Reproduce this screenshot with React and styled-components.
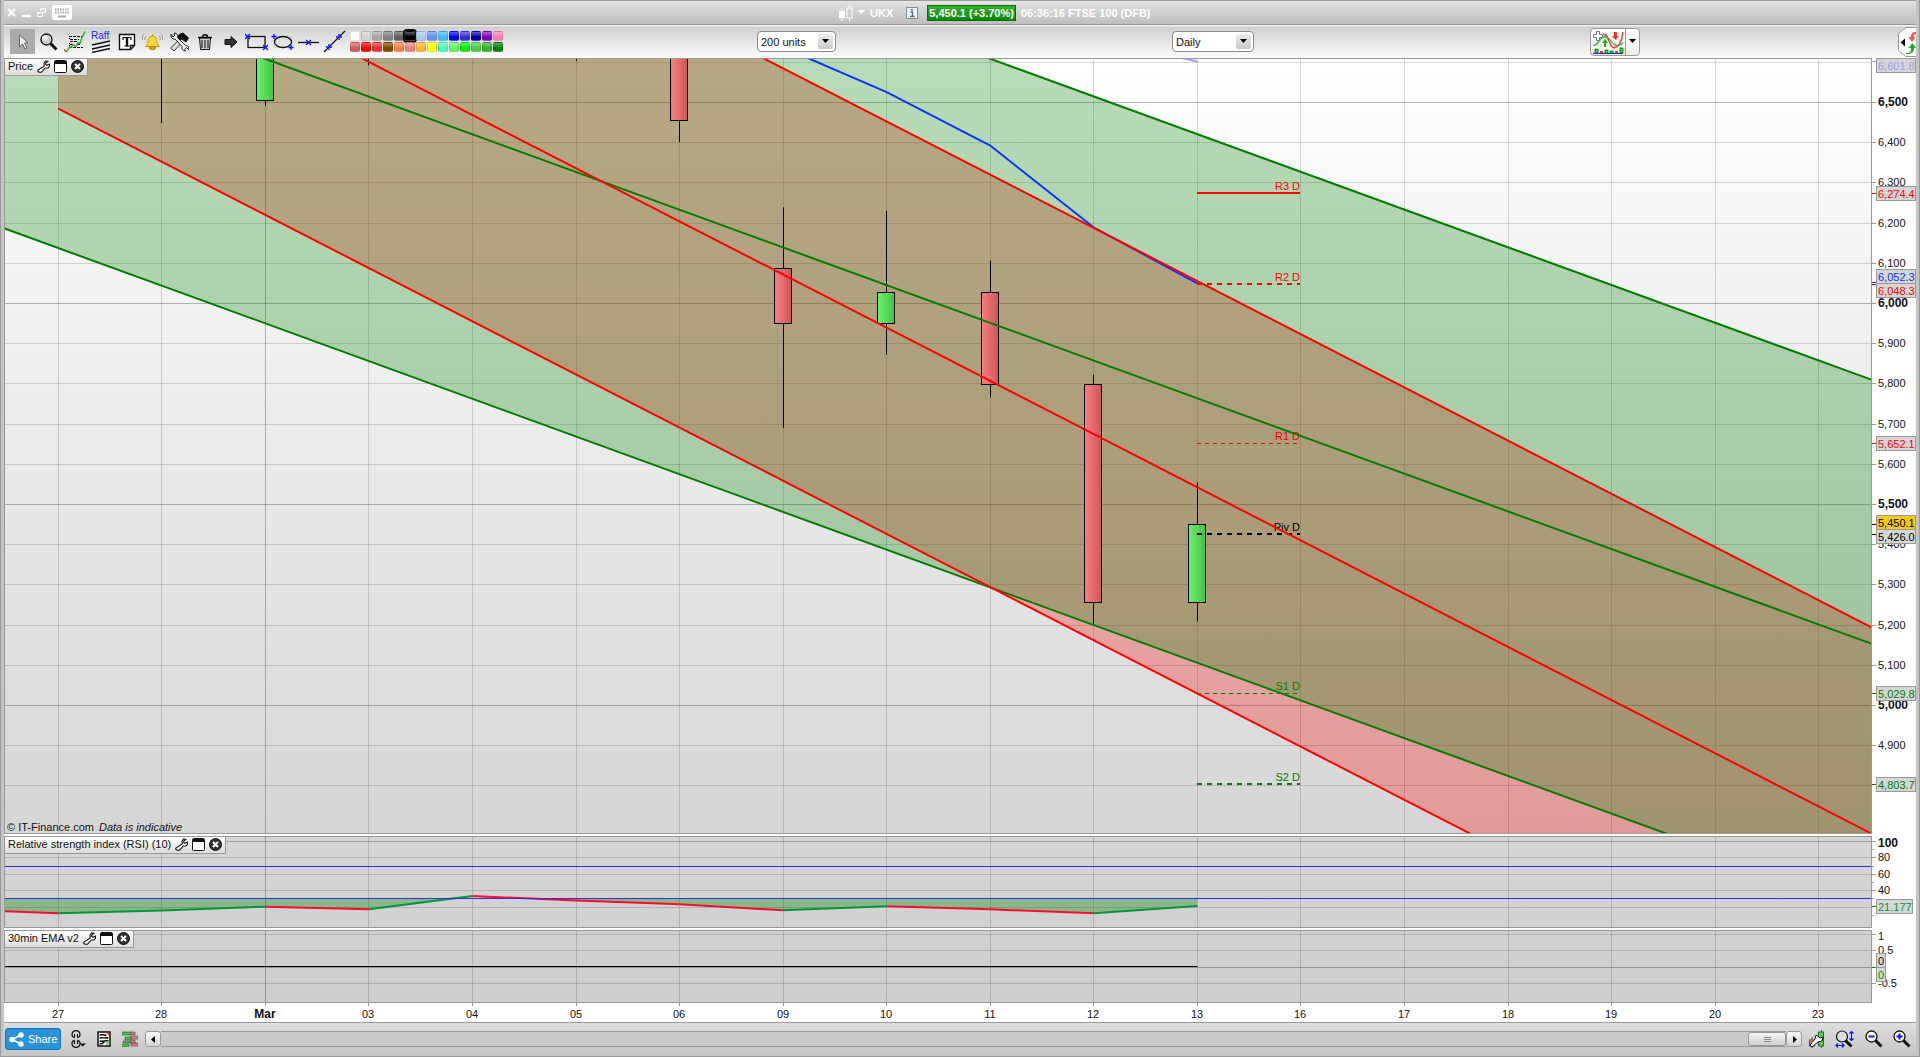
import React, { useId, useLayoutEffect, useRef, useState } from "react";
import styled, { createGlobalStyle } from "styled-components";

const GlobalStyle = createGlobalStyle`
  * {
    box-sizing: border-box;
  }
  body {
    margin: 0;
    font: 11px/14px "Liberation Sans", Arial, sans-serif;
    color: #111;
  }
  button, select, input {
    font: inherit;
    color: inherit;
    margin: 0;
  }
  svg {
    display: block;
  }
`;

const Window = styled.div`
  display: flex;
  flex-direction: column;
  min-height: 100vh;
  padding: 0 3px 1px 3px;
  background: #c4c4c4;
  border: 1px solid #999;
  border-top: 0;
`;

const TitleBar = styled.header`
  display: grid;
  grid-template-columns: 835fr 1077fr;
  align-items: center;
  height: 25px;
  border-top: 1px solid #999;
  border-bottom: 1px solid #999;
  background: linear-gradient(#e8e8e8, #dedede 10%, #bebebe);
  color: #fff;
  font-weight: bold;
`;

const WindowButtons = styled.div`
  display: flex;
  align-items: center;
  gap: 6px;
  padding-left: 3px;
`;

const PlainButton = styled.button`
  display: flex;
  align-items: center;
  justify-content: center;
  padding: 0;
  border: 0;
  background: none;
`;

const Instrument = styled.div`
  display: flex;
  align-items: center;
  gap: 5px;
  white-space: nowrap;
`;

const Symbol = styled.span`
  margin-right: 8px;
`;

const Quote = styled.span`
  margin-left: 4px;
  padding: 0 1px;
  border: 1px solid #067006;
  background: linear-gradient(#2fae2f, #0d860d);
`;

const Toolbar = styled.div`
  display: grid;
  grid-template-columns: 753fr 415fr 418fr 326fr;
  align-items: center;
  height: 33px;
  background: linear-gradient(#fff, #d0d0d0 6%, #e4e4e4 50%, #fdfdfd);
`;

const Tools = styled.div`
  display: flex;
  align-items: center;
  gap: 1px;
  padding-left: 6px;
`;

const ToolButton = styled(PlainButton)`
  width: 25px;
  height: 25px;
  background: ${(p) => (p.$active ? "#ababab" : "none")};
`;

const Palette = styled.div`
  display: grid;
  grid-template-columns: repeat(14, 10px);
  gap: 1px;
  margin-left: 2px;
`;

const Swatch = styled.button`
  height: 10px;
  padding: 0;
  border: 1px solid rgba(0, 0, 0, 0.12);
  border-radius: 2px;
  background: linear-gradient(rgba(255, 255, 255, 0.35), rgba(255, 255, 255, 0.1) 45%, transparent 50%)
    ${(p) => p.$color};
  outline: ${(p) => (p.$active ? "2px solid #111" : "none")};
`;

const SelectBox = styled.label`
  position: relative;
  display: block;
  width: ${(p) => p.$width};
`;

const Select = styled.select`
  appearance: none;
  width: 100%;
  height: 21px;
  padding: 0 20px 0 3px;
  border: 1px solid #8c8c8c;
  border-radius: 4px;
  background: #fff;
`;

const SelectArrow = styled.span`
  position: absolute;
  top: 3px;
  right: 3px;
  display: flex;
  align-items: center;
  justify-content: center;
  width: 15px;
  height: 15px;
  border-radius: 2px;
  background: linear-gradient(#eee, #c8c8c8);
  pointer-events: none;
`;

const ToolbarEnd = styled.div`
  display: flex;
  align-items: center;
  justify-content: space-between;
`;

const SplitButton = styled.div`
  display: flex;
  height: 28px;
  border: 1px solid #999;
  border-radius: 4px;
  background: linear-gradient(#fff, #eee);
`;

const SplitPart = styled(PlainButton)`
  width: ${(p) => p.$width};
  & + & {
    border-left: 1px solid #999;
  }
`;

const Workspace = styled.main`
  flex: 1;
  display: flex;
  flex-direction: column;
  gap: 2px;
  background: #fff;
`;

const Panel = styled.section`
  position: relative;
  flex: ${(p) => (p.$height ? `0 0 ${p.$height}` : "1 0 300px")};
  min-width: 0;
  & > svg {
    position: absolute;
    inset: 0;
    overflow: visible;
  }
`;

const PanelTitle = styled.div`
  position: absolute;
  top: 1px;
  left: 1px;
  display: flex;
  align-items: center;
  gap: 4px;
  height: 17px;
  padding: 0 3px 2px;
  border-right: 1px solid #999;
  border-bottom: 1px solid #999;
  background: linear-gradient(#fff, #dcdcdc);
`;

const DateAxis = styled.div`
  height: 20px;
  margin-top: -2px;
  border-bottom: 1px solid #999;
`;

const BottomBar = styled.footer`
  display: flex;
  align-items: center;
  height: 32px;
  padding: 0 5px 0 1px;
  background: linear-gradient(#dedede, #c6c6c6);
`;

const ShareButton = styled.button`
  display: flex;
  align-items: center;
  gap: 4px;
  height: 22px;
  padding: 0 3px;
  border: 1px solid #1674b4;
  border-radius: 3px;
  background: #2a92d8;
  color: #fff;
`;

const BottomIcons = styled.div`
  display: flex;
  align-items: center;
  gap: ${(p) => p.$gap};
  padding: ${(p) => p.$padding};
`;

const ScrollButton = styled(PlainButton)`
  width: 16px;
  height: 16px;
  border: 1px solid #999;
  border-radius: 3px;
  background: linear-gradient(#fafafa, #d4d4d4);
`;

const ScrollRange = styled.input`
  appearance: none;
  flex: 1;
  min-width: 0;
  height: 16px;
  border: 1px solid #999;
  border-left: 0;
  border-right: 0;
  background: #cbcbcb;
  &::-webkit-slider-thumb {
    appearance: none;
    width: 38px;
    height: 14px;
    border: 1px solid #999;
    border-radius: 3px;
    background:
      repeating-linear-gradient(#888 0 1px, transparent 1px 2px) center / 7px 5px no-repeat,
      linear-gradient(#f4f4f4, #d0d0d0);
  }
`;

/* ---------- icons ---------- */

const Icon = ({ w = 20, h = 20, children }) => (
  <svg width={w} height={h} viewBox={`0 0 ${w} ${h}`} fill="none" stroke="#111" aria-hidden="true">
    {children}
  </svg>
);

const CloseIcon = () => (
  <Icon w={9} h={9}>
    <path d="M1 1l7 7M8 1l-7 7" stroke="#fff" strokeWidth="2" />
  </Icon>
);

const MinimizeIcon = () => (
  <Icon w={9} h={9}>
    <path d="M0 8h9" stroke="#fff" strokeWidth="2" />
  </Icon>
);

const RestoreIcon = () => (
  <Icon w={9} h={9}>
    <path d="M3.5 3V.5h5v4H6M3 1h6M.5 4.5h5v4h-5zM0 5h6" stroke="#fff" />
  </Icon>
);

const KeyboardIcon = () => (
  <Icon w={20} h={15}>
    <rect width="20" height="15" rx="2" fill="#fff" stroke="none" />
    <path d="M3 4.5h14M3 7.5h14" stroke="#aaa" strokeWidth="2" strokeDasharray="1.5 1" />
    <path d="M6 11.5h8" stroke="#aaa" strokeWidth="2" />
  </Icon>
);

const CandlesIcon = () => (
  <Icon w={14} h={16}>
    <path d="M3 3v13M10.5 0v3M10.5 13v3" stroke="#fff" />
    <rect x="0" y="6" width="6" height="7" fill="#fff" stroke="none" />
    <rect x="8" y="3" width="5" height="10" stroke="#fff" />
  </Icon>
);

const InfoIcon = () => (
  <Icon w={12} h={12}>
    <rect x=".5" y=".5" width="11" height="11" fill="#eef3f7" stroke="#7d8f9c" />
    <path d="M5 2.8h2" stroke="#5a6b78" strokeWidth="1.6" />
    <path d="M4.500 5h2v4.500M4 9.500h4.500" stroke="#5a6b78" strokeWidth="1.300" />
  </Icon>
);

const Triangle = ({ color = "#000", dir = "down" }) => {
  const shapes = {
    down: "M0 1h7L3.500 5z",
    left: "M5 0v7L1 3.500z",
    right: "M2 0v7l4-3.500z",
  };
  return (
    <Icon w={7} h={7}>
      <path d={shapes[dir]} fill={color} stroke="none" />
    </Icon>
  );
};

const PointerIcon = () => (
  <Icon>
    <path d="M6.500 3v12l3-3 2.500 5 2-1-2.500-5H15z" fill="#eee" stroke="#666" />
  </Icon>
);

const MagnifierIcon = ({ mark }) => (
  <Icon w={18} h={18}>
    <path d="M10.500 10.500l6 6" strokeWidth="3" />
    <circle cx="6.500" cy="6.500" r="5.500" fill={mark ? "#fff" : "#ccc"} strokeWidth="1.300" />
    {!mark && <ellipse cx="5" cy="5" rx="3" ry="2.500" fill="#f4f4f4" stroke="none" />}
    {mark && <path d={mark === "plus" ? "M3.500 6.500h6M6.500 3.500v6" : "M3.500 6.500h6"} stroke="#11f" strokeWidth="2" />}
  </Icon>
);

const IndicatorIcon = () => (
  <Icon w={22} h={22}>
    <path d="M5 5.500h13M6 8.500h9M6 10.500h8M6 13.500h4M13 13.500h4M5 16.500h14" strokeDasharray="3 1" />
    <path d="M5.500 5v4M5.500 12v4" strokeDasharray="1 1" />
    <path d="M0 18.500l2.500 2.500M10 14l2 1.500" stroke="#e33" strokeWidth="1.500" />
    <path d="M2.500 21l3-5h2l2-3M12 15.500l2-4 2 1 2-6 3-6" stroke="#2b2" strokeWidth="1.500" />
  </Icon>
);

const RaffText = styled.text`
  font: 10px "Liberation Sans", Arial, sans-serif;
  fill: #1030e8;
  stroke: none;
`;

const RaffIcon = () => (
  <Icon w={22} h={22}>
    <RaffText x="1" y="8">Raff</RaffText>
    <path d="M2 14l18-4M2 18l18-4M2 21.500l18-4" strokeWidth="1.300" />
  </Icon>
);

const TextIcon = () => (
  <Icon w={18} h={18}>
    <path d="M1.500 1.500h15v11l-4 4h-11zM16.500 12.500h-4v4" fill="#fff" strokeWidth="1.400" />
    <path d="M4.500 4.500h9M5 4v3M13 4v3M6.500 13h5" strokeWidth="1.200" />
    <path d="M9 4.500v9" strokeWidth="2.400" />
  </Icon>
);

const BellIcon = () => (
  <Icon w={21} h={18}>
    <path d="M10.500 1v2M3.500 13.500c2.500-2 2.500-4 3-7 .5-2.500 2-3.500 4-3.500s3.500 1 4 3.500c.5 3 .5 5 3 7z" fill="#fbd83c" stroke="#c8930a" />
    <ellipse cx="10.500" cy="15" rx="3" ry="1.500" fill="#e8a800" stroke="#a87800" />
    <path d="M4 3c-1.500 1-1.500 3-1 4M2 1C.5 3 0 5 .5 7M17 3c1.500 1 1.500 3 1 4M19 1c1.500 2 2 4 1.500 6" stroke="#999" />
  </Icon>
);

const ToolsIcon = () => (
  <Icon>
    <path d="M10 8l3 2.500-8 8.500-3.500-3z" fill="#ddd" strokeWidth=".8" />
    <path d="M10 2.500l4-1.500 5.500 5-2.500 4-4-3-2 1-2-2z" fill="#111" />
    <path d="M2 2l2 3 2-2-1-2c3 0 4 2 3.500 4.500l8 8c2.500 0 4 1.500 3 4l-2-2-2 2 1 1.500c-3 0-4-2-3.500-4.500l-7-7.500C3 7.500 1.500 5 2 2z" fill="#eee" strokeWidth=".9" />
  </Icon>
);

const TrashIcon = () => (
  <Icon w={16} h={18}>
    <path d="M2.500 5l1 11.500h9l1-11.500z" fill="#ccc" />
    <path d="M1 4.500h14M5.500 4c0-3 5-3 5 0" strokeWidth="1.500" />
    <path d="M5 7v8M8 7v8M11 7v8" />
  </Icon>
);

const ArrowIcon = () => (
  <Icon w={16} h={14}>
    <path d="M2 4.500h6V1.500l6 5.500-6 5.500V9.500H2z" fill="#333" stroke="#111" />
  </Icon>
);

const RectIcon = () => (
  <Icon w={23} h={18}>
    <rect x="3" y="3.500" width="17" height="11" strokeWidth="1.300" />
    <path d="M0 1l5 5M5 1L0 6M18 12l5 5M23 12l-5 5" stroke="#11f" strokeWidth="1.300" />
  </Icon>
);

const EllipseIcon = () => (
  <Icon w={23} h={18}>
    <rect x="3.500" y="3.500" width="17" height="11" stroke="#bbb" strokeDasharray="1 1" />
    <ellipse cx="12" cy="9" rx="8.500" ry="5.500" strokeWidth="1.300" />
    <path d="M3 1v5M.5 3.500h5M20 12v5M17.500 14.500h5" stroke="#11f" strokeWidth="1.300" />
  </Icon>
);

const HLineIcon = () => (
  <Icon w={23} h={18}>
    <path d="M1 9.500h21" strokeWidth="1.300" />
    <path d="M9 7l5 5M14 7l-5 5" stroke="#11f" strokeWidth="1.300" />
  </Icon>
);

const TrendIcon = () => (
  <Icon w={23} h={23}>
    <path d="M1 22L22 1" strokeWidth="1.300" />
    <path d="M6 14v6M3 17h6M16 4v6M13 7h6" stroke="#11f" strokeWidth="1.300" />
  </Icon>
);

const AddIndicatorIcon = () => (
  <Icon w={32} h={24}>
    <path d="M11 4c6 0 6 14 11 14 4 0 7-4 9-14v8c-3 4-6 5-9 4-4-2-6-8-11-8-3 2-5 5-9 7z" fill="#cfe6cf" stroke="none" />
    <path d="M11 4c6-1 6 14 11 14 5-1 8-8 9-16" stroke="#e44" strokeWidth="1.500" />
    <path d="M1 15.500c6 0 6-8 12-9 6 1 7 9 12 9 3 0 5-1 6-3" stroke="#3a3" strokeWidth="1.200" />
    <path d="M4.500 1.500h3v3h3v3h-3v3h-3v-3h-3v-3h3z" fill="#fff" stroke="#777" />
    <path d="M12 17v-4h-2l3-4 3 4h-2v4z" fill="#1b1" stroke="none" />
    <path d="M22 2h3v4h2l-3.500 4L20 6h2z" fill="#e33" stroke="none" />
    <path d="M3 19h3v4H3zM13 20h3v3h-3zM18 21h3v2h-3zM28 18h3v5h-3z" fill="#1d1" stroke="#171" strokeWidth=".8" />
    <path d="M8 21h3v2H8zM23 21h3v2h-3z" fill="#e33" stroke="none" />
    <path d="M1 23.500h30" stroke="#22c" />
  </Icon>
);

const SideTabIcon = () => (
  <Icon w={18} h={30}>
    <path d="M18 .5H8l-6 4.500q-1.500 1-1.500 3v14q0 2 1.500 3l6 4.500h10" fill="#fff" stroke="#999" />
    <path d="M7 11.500v8L2.500 15.500z" fill="#000" stroke="none" />
    <path d="M18 5c-4 0-5 2-5 5h-3l4 5 3.500-5h-2c0-2 .5-3 2.500-3z" fill="#e55" stroke="none" />
    <path d="M8 26c5 0 5-2 5-5h-2.500l4-5 3.500 5h-2c0 4-2 6-8 6z" fill="#2a2" stroke="none" />
  </Icon>
);

const WrenchIcon = () => (
  <Icon w={13} h={13}>
    <path d="M8.500.8L7 3.300 7.300 6 1.200 9.800q-1.200 1.700 1 2.400h2.300L8.300 8H11l1.600-2V4L10 5.300 8.700 4.500 8.800 3l2-1.500z" fill="#fff" strokeWidth="1.100" />
  </Icon>
);

const MaximizeIcon = () => (
  <Icon w={13} h={13}>
    <rect x=".5" y=".5" width="12" height="12" rx="1" fill="#fff" />
    <path d="M1 2.500h11" strokeWidth="3" />
  </Icon>
);

const CloseRoundIcon = () => (
  <Icon w={13} h={13}>
    <circle cx="6.500" cy="6.500" r="6" fill="#333" />
    <path d="M4 4l5 5M9 4L4 9" stroke="#fff" strokeWidth="2" />
  </Icon>
);

const ShareIcon = () => (
  <Icon w={15} h={15}>
    <path d="M12 3L3 7.500 12 12" stroke="#fff" strokeWidth="1.500" />
    <g fill="#fff" stroke="none">
      <circle cx="12" cy="3" r="2.700" />
      <circle cx="3" cy="7.500" r="2.700" />
      <circle cx="12" cy="12" r="2.700" />
    </g>
  </Icon>
);

const LinkIcon = () => (
  <Icon w={15} h={18}>
    <path d="M3.500 7.500C-.5 7 .5.700 5 .7s5.500 6.300 1.500 6.800M3.500 10.500C-.5 11 .5 17.300 5 17.300s5.500-6.300 1.500-6.800" strokeWidth="1.300" />
    <path d="M3.500 4v3.500M6.500 4v3.500M3.500 10.500V14M6.500 10.500V14" strokeWidth="1.100" />
    <path d="M8.500 13.500H15l-3.200 3z" fill="#000" stroke="none" />
  </Icon>
);

const ReportIcon = () => (
  <Icon w={14} h={16}>
    <rect x="1" y="1" width="12" height="14" fill="#fff" strokeWidth="1.500" />
    <path d="M2.500 4c3 0 4-1 7 .500M2.500 7c3-1 5 1 9-.500M2.500 10c4 1 5-1 9 0M2.500 13c3 0 4-1 5-2" strokeWidth="1.400" />
    <path d="M9 2h3v3z" fill="#e55" stroke="none" />
    <path d="M10 14v-3M12 14v-4" stroke="#2a2" />
  </Icon>
);

const DepthIcon = () => (
  <Icon w={16} h={16}>
    <path d="M0 1h9v3H0zM3 6h6v3H3zM1 10h8v2H1zM0 13h7v3H0z" fill="#3c3" stroke="#555" strokeWidth=".7" />
    <path d="M9 1h4v3H9zM9 5h7v3H9zM9 9h4v3H9zM9 12h7v3H9z" fill="#e77" stroke="#555" strokeWidth=".7" />
  </Icon>
);

const ChartSettingsIcon = () => (
  <Icon w={16} h={18}>
    <path d="M3 7v11M12.500 0v18" stroke="#555" />
    <rect x=".5" y="10" width="5" height="6" fill="#e88" stroke="#644" />
    <rect x="9.500" y="2" width="5" height="14" fill="#4d4" stroke="#363" />
    <path d="M7 5l-1 4-5 6 2 2 6-5 4-1 1-4-3 1-1-1z" fill="#fff" />
  </Icon>
);

const ZoomFitIcon = () => (
  <Icon w={20} h={18}>
    <path d="M10.500 10.500l6 6" strokeWidth="3" />
    <circle cx="7" cy="6.500" r="5.500" fill="#ddd" strokeWidth="1.200" />
    <path d="M16.500 2v8M14.500 3.500l2-2 2 2M14.500 8.500l2 2 2-2M1 15.500h8M3 13.500l-2 2 2 2M7 13.500l2 2-2 2" stroke="#11f" strokeWidth="1.200" />
  </Icon>
);

/* ---------- chart ---------- */

const AXIS_WIDTH = 44;

const dates = ["27", "28", "Mar", "03", "04", "05", "06", "09", "10", "11", "12", "13", "16", "17", "18", "19", "20", "23"];

const candles = [
  { bar: 1, high: 6700, low: 6449 },
  { bar: 2, high: 6700, low: 6492, open: 6504, close: 6700 },
  { bar: 3, high: 6700, low: 6592 },
  { bar: 5, high: 6700, low: 6604 },
  { bar: 6, high: 6700, low: 6402, open: 6700, close: 6454 },
  { bar: 7, high: 6239, low: 5691, open: 6087, close: 5949 },
  { bar: 8, high: 6231, low: 5873, open: 5949, close: 6027 },
  { bar: 9, high: 6107, low: 5766, open: 6027, close: 5798 },
  { bar: 10, high: 5823, low: 5199, open: 5798, close: 5255 },
  { bar: 11, high: 5555, low: 5209, open: 5255, close: 5450 },
];

const channels = [
  { color: "#f00", fill: "rgba(255, 0, 0, 0.28)", from: 0, slope: -132.3, upper: 7511, middle: 6998, lower: 6485 },
  { color: "#007d00", fill: "rgba(0, 128, 0, 0.28)", from: -1, slope: -93.8, upper: 7453, middle: 6796, lower: 6138 },
];

const average = [[7, 6637], [8, 6526], [9, 6393], [10, 6189], [11, 6050]];

const pivots = [
  { name: "R3 D", value: 6274.4, color: "#f00", width: 2 },
  { name: "R2 D", value: 6048.3, color: "#f00", width: 2, dash: "5 5" },
  { name: "R1 D", value: 5652.1, color: "#f00", width: 1, dash: "4 4" },
  { name: "Piv D", value: 5426.0, color: "#000", width: 2, dash: "5 5" },
  { name: "S1 D", value: 5029.8, color: "#007d00", width: 1, dash: "4 4" },
  { name: "S2 D", value: 4803.7, color: "#007d00", width: 2, dash: "5 5" },
];

// shift keeps neighbouring tags from overlapping
const priceTags = [
  { value: 6601.8, text: "6,601.8", color: "#9c9cf0", shift: 4 },
  { value: 6274.4, text: "6,274.4", color: "#f00" },
  { value: 6052.3, text: "6,052.3", color: "#0b35ff", shift: -6 },
  { value: 6048.3, text: "6,048.3", color: "#f00", shift: 6 },
  { value: 5652.1, text: "5,652.1", color: "#f00" },
  { value: 5450.1, text: "5,450.1", color: "#000", fill: "#f6c915", shift: -2 },
  { value: 5426.0, text: "5,426.0", color: "#000", shift: 2 },
  { value: 5029.8, text: "5,029.8", color: "#007d00" },
  { value: 4803.7, text: "4,803.7", color: "#007d00" },
];

const rsi = [[-0.52, 14.8], [0, 12.3], [1, 15.8], [2, 20.4], [3, 17.2], [4, 33.4], [5, 28], [6, 23.5], [7, 16], [8, 20.8], [9, 17.2], [10, 12.3], [11, 21.177]];

const Label = styled.text`
  font-size: ${(p) => (p.$major ? "12px" : "11px")};
  font-weight: ${(p) => (p.$major ? "bold" : "normal")};
  fill: ${(p) => p.$color || "#111"};
`;

const GridLine = styled.line`
  stroke: ${(p) => (p.$major ? "rgba(0, 0, 0, 0.27)" : "rgba(0, 0, 0, 0.15)")};
  shape-rendering: crispEdges;
`;

function useSize() {
  const ref = useRef(null);
  const [size, setSize] = useState({ width: 0, height: 0 });
  useLayoutEffect(() => {
    const measure = () => {
      const box = ref.current.getBoundingClientRect();
      setSize({ width: Math.round(box.width), height: Math.round(box.height) });
    };
    measure();
    const observer = new ResizeObserver(measure);
    observer.observe(ref.current);
    return () => observer.disconnect();
  }, []);
  return [ref, size];
}

const crisp = (n) => Math.floor(n) + 0.5;
const barX = (width) => (bar) => (width * (bar + 0.5137)) / 18.0185;

function AxisTag({ y, text, color, fill }) {
  return (
    <g>
      <rect x="4.500" y={y - 7} width={text.length > 1 ? (text.length > 6 ? 39 : 36) : 9} height="14" fill={fill || "#d6d6d6"} stroke="#999" />
      <Label x="6" y={y + 4} $color={color}>{text}</Label>
    </g>
  );
}

function ChartPanel({ title, height, top, bottom, ticks, minorTicks = [], tags, shade, note, children }) {
  const [ref, size] = useSize();
  const id = useId();
  const w = Math.max(size.width - AXIS_WIDTH - 2, 0);
  const h = Math.max(size.height - 2, 0);
  const x = barX(w);
  const y = (v) => ((top - v) / (top - bottom)) * h;

  return (
    <Panel ref={ref} $height={height} aria-label={title}>
      <svg width={size.width} height={size.height}>
        <defs>
          <linearGradient id={id} x2="0" y2="1">
            <stop offset="0" stopColor={shade[0]} />
            <stop offset="1" stopColor={shade[1]} />
          </linearGradient>
        </defs>
        <rect x=".5" y=".5" width={w + 1} height={h + 1} fill={`url(#${id})`} stroke="#999" />
        <svg x="1" y="1" width={w} height={h}>
          {dates.map((d, i) => (
            <GridLine key={d} x1={crisp(x(i))} x2={crisp(x(i))} y1="0" y2={h} $major={d === "Mar"} />
          ))}
          {ticks.map((t) => (
            <GridLine key={t.value} x1="0" x2={w} y1={crisp(y(t.value))} y2={crisp(y(t.value))} $major={t.major} />
          ))}
          {children(x, y, w, h)}
        </svg>
        <g transform={`translate(${w + 2} 1)`}>
          {minorTicks.map((v) => (
            <line key={v} x1="0" x2="2" y1={crisp(y(v))} y2={crisp(y(v))} stroke="#999" />
          ))}
          {ticks.map((t) => (
            <g key={t.value}>
              {t.text && <line x1="0" x2="4" y1={crisp(y(t.value))} y2={crisp(y(t.value))} stroke="#999" />}
              <Label x="6" y={crisp(y(t.value)) + (t.drop || 3)} $major={t.bold}>{t.text}</Label>
            </g>
          ))}
          {tags.map((t) => (
            <line key={t.text + t.color} x1="0" x2="4" y1={crisp(y(t.value))} y2={crisp(y(t.value))} stroke={t.color} />
          ))}
          {tags.map((t) => (
            <AxisTag key={t.text + t.color} y={crisp(y(t.value)) + (t.shift || 0)} text={t.text} color={t.color} fill={t.fill} />
          ))}
        </g>
        {note && (
          <Label x="3" y={h - 1}>
            {note[0]}
            <tspan dx="5" fontStyle="italic">{note[1]}</tspan>
          </Label>
        )}
      </svg>
      <PanelTitle>
        {title}
        <PlainButton aria-label="Settings"><WrenchIcon /></PlainButton>
        <PlainButton aria-label="Maximize"><MaximizeIcon /></PlainButton>
        <PlainButton aria-label="Close panel"><CloseRoundIcon /></PlainButton>
      </PanelTitle>
    </Panel>
  );
}

function Candle({ x, y, candle }) {
  const cx = crisp(x(candle.bar));
  const rising = candle.close > candle.open;
  const bodyTop = crisp(y(Math.max(candle.open, candle.close)));
  const bodyBottom = crisp(y(Math.min(candle.open, candle.close)));
  return (
    <g stroke="#000">
      <line x1={cx} x2={cx} y1={y(candle.high)} y2={y(candle.low)} />
      {candle.open && (
        <rect x={cx - 9} y={bodyTop} width="17" height={bodyBottom - bodyTop} fill={`url(#${rising ? "rising" : "falling"})`} />
      )}
    </g>
  );
}

function PriceDrawing({ x, y }) {
  const end = 18;
  const points = (list) => list.map(([bar, v]) => `${x(bar)},${y(v)}`).join(" ");
  const segment = (c, base) => [[c.from, base + c.from * c.slope], [end, base + end * c.slope]];
  return (
    <>
      <defs>
        <linearGradient id="rising">
          <stop offset="0" stopColor="#6fef6f" />
          <stop offset="1" stopColor="#42c442" />
        </linearGradient>
        <linearGradient id="falling">
          <stop offset="0" stopColor="#fa8080" />
          <stop offset="1" stopColor="#cc5656" />
        </linearGradient>
      </defs>
      {channels.map((c) => (
        <polygon key={c.color} fill={c.fill} points={points([...segment(c, c.upper), ...segment(c, c.lower).reverse()])} />
      ))}
      {candles.map((c) => (
        <Candle key={c.bar} x={x} y={y} candle={c} />
      ))}
      <g fill="none" strokeWidth="2">
        <polyline points={points(average)} stroke="#0b35ff" />
        <polyline points={points([[10, 6660], [11, 6602]])} stroke="#a0a0ff" />
      </g>
      {pivots.map((p) => {
        const py = p.width === 2 ? Math.round(y(p.value)) : crisp(y(p.value));
        return (
          <g key={p.name}>
            <line x1={Math.floor(x(11))} x2={Math.floor(x(12))} y1={py} y2={py} stroke={p.color} strokeWidth={p.width} strokeDasharray={p.dash} />
            <Label x={Math.floor(x(12))} y={Math.floor(py) - 3} textAnchor="end" $color={p.color}>{p.name}</Label>
          </g>
        );
      })}
      {[...channels].reverse().map((c) =>
        [c.upper, c.middle, c.lower].map((base) => (
          <polyline key={base} points={points(segment(c, base))} stroke={c.color} strokeWidth="2" />
        ))
      )}
    </>
  );
}

function RsiDrawing({ x, y, w }) {
  const line = rsi.map(([bar, v]) => `${x(bar)},${y(v)}`).join(" ");
  const clip = useId();
  return (
    <>
      <clipPath id={clip}>
        <rect x="0" y={y(30)} width={w} height={y(0) - y(30)} />
      </clipPath>
      <polygon clipPath={`url(#${clip})`} fill="rgba(0, 128, 0, 0.34)" points={`${x(-0.52)},${y(30)} ${line} ${x(11)},${y(30)}`} />
      {rsi.slice(1).map(([bar, v], i) => (
        <line key={bar} x1={x(rsi[i][0])} y1={y(rsi[i][1])} x2={x(bar)} y2={y(v)} strokeWidth="2" stroke={v > rsi[i][1] ? "#00963c" : "#ff0a32"} />
      ))}
      {[70, 30].map((v) => (
        <line key={v} x1="0" x2={w} y1={crisp(y(v))} y2={crisp(y(v))} stroke="#3030dc" />
      ))}
    </>
  );
}

function Dates() {
  const [ref, size] = useSize();
  const x = barX(size.width - AXIS_WIDTH - 2);
  return (
    <DateAxis ref={ref}>
      <svg width={size.width} height="19">
        {dates.map((d, i) => (
          <g key={d}>
            <line x1={crisp(x(i)) + 1} x2={crisp(x(i)) + 1} y1="0" y2="3" stroke="#999" />
            <Label x={Math.floor(x(i)) + 1} y="15" textAnchor="middle" $major={d === "Mar"}>{d}</Label>
          </g>
        ))}
      </svg>
    </DateAxis>
  );
}

const priceTicks = Array.from({ length: 19 }, (_, i) => {
  const value = 6600 - i * 100;
  return {
    value,
    text: value < 6600 && value > 4800 ? value.toLocaleString("en-US") : "",
    major: value % 500 === 0,
    bold: value % 500 === 0,
  };
});

const rsiTicks = [
  { value: 100, text: "100", major: true, bold: true, drop: 5 },
  { value: 80, text: "80" },
  { value: 60, text: "60" },
  { value: 40, text: "40" },
  { value: 20, text: "" },
];

const emaTicks = [
  { value: 1, text: "1", drop: 5 },
  { value: 0.5, text: "0.5" },
  { value: 0, text: "", major: true },
  { value: -0.5, text: "-0.5" },
];

const tools = [
  ["Pointer", PointerIcon],
  ["Zoom", MagnifierIcon],
  ["Indicators", IndicatorIcon],
  ["Raff channel", RaffIcon],
  ["Text", TextIcon],
  ["Alert", BellIcon],
  ["Settings", ToolsIcon],
  ["Delete", TrashIcon],
  ["Arrow", ArrowIcon],
  ["Rectangle", RectIcon],
  ["Ellipse", EllipseIcon],
  ["Horizontal line", HLineIcon],
  ["Trend line", TrendIcon],
];

const colors = [
  "#fff", "#d4d4d4", "#a8a8a8", "#808080", "#606060", "#000", "#a8c8fa", "#6490fa", "#40b8fa", "#00f", "#3232d8", "#0000a0", "#8000b8", "#fa80b8",
  "#d85c5c", "#f00", "#e83030", "#804800", "#fa8040", "#f08080", "#fab830", "#ff0", "#48fac0", "#68f068", "#00f000", "#48d048", "#30b030", "#008000",
];

function DropDown({ label, value, width }) {
  return (
    <SelectBox $width={width}>
      <Select aria-label={label} defaultValue={value}>
        <option>{value}</option>
      </Select>
      <SelectArrow><Triangle /></SelectArrow>
    </SelectBox>
  );
}

function App() {
  return (
    <Window>
      <GlobalStyle />
      <TitleBar>
        <WindowButtons>
          <PlainButton aria-label="Close"><CloseIcon /></PlainButton>
          <PlainButton aria-label="Minimize"><MinimizeIcon /></PlainButton>
          <PlainButton aria-label="Restore"><RestoreIcon /></PlainButton>
          <PlainButton aria-label="Keyboard"><KeyboardIcon /></PlainButton>
        </WindowButtons>
        <Instrument>
          <CandlesIcon />
          <Triangle color="#fff" />
          <Symbol>UKX</Symbol>
          <InfoIcon />
          <Quote>5,450.1 (+3.70%)</Quote>
          <span>06:36:16 FTSE 100 (DFB)</span>
        </Instrument>
      </TitleBar>

      <Toolbar>
        <Tools>
          {tools.map(([name, ToolIcon], i) => (
            <ToolButton key={name} aria-label={name} $active={i === 0}><ToolIcon /></ToolButton>
          ))}
          <Palette>
            {colors.map((c, i) => (
              <Swatch key={c} aria-label={c} $color={c} $active={i === 5} />
            ))}
          </Palette>
        </Tools>
        <DropDown label="Units" value="200 units" width="79px" />
        <DropDown label="Period" value="Daily" width="82px" />
        <ToolbarEnd>
          <SplitButton>
            <SplitPart $width="34px" aria-label="Add indicator"><AddIndicatorIcon /></SplitPart>
            <SplitPart $width="14px" aria-label="Indicator list"><Triangle /></SplitPart>
          </SplitButton>
          <PlainButton aria-label="Trading panel"><SideTabIcon /></PlainButton>
        </ToolbarEnd>
      </Toolbar>

      <Workspace>
        <ChartPanel
          title="Price"
          top={6608.2}
          bottom={4682.8}
          ticks={priceTicks}
          tags={priceTags}
          shade={["#ffffff", "#d6d6d6"]}
          note={["© IT-Finance.com", "Data is indicative"]}
        >
          {(x, y) => <PriceDrawing x={x} y={y} />}
        </ChartPanel>
        <ChartPanel
          title="Relative strength index (RSI) (10)"
          height="92px"
          top={105.5}
          bottom={-4.4}
          ticks={rsiTicks}
          minorTicks={[90, 70, 50, 30, 10]}
          tags={[{ value: 21.177, text: "21.177", color: "#00963c" }]}
          shade={["#d6d6d6", "#d1d1d1"]}
        >
          {(x, y, w) => <RsiDrawing x={x} y={y} w={w} />}
        </ChartPanel>
        <ChartPanel
          title="30min EMA v2"
          height="73px"
          top={1.1}
          bottom={-1.06}
          ticks={emaTicks}
          tags={[
            { value: 0, text: "0", color: "#111", shift: -7 },
            { value: 0, text: "0", color: "#0a8c0a", shift: 7 },
          ]}
          shade={["#d1d1d1", "#cdcdcd"]}
        >
          {(x, y) => <line x1="0" x2={x(11)} y1={crisp(y(0)) - 1} y2={crisp(y(0)) - 1} stroke="#000" />}
        </ChartPanel>
        <Dates />
      </Workspace>

      <BottomBar>
        <ShareButton><ShareIcon />Share</ShareButton>
        <BottomIcons $gap="11px" $padding="0 7px 0 10px">
          <PlainButton aria-label="Link windows"><LinkIcon /></PlainButton>
          <PlainButton aria-label="Report"><ReportIcon /></PlainButton>
          <PlainButton aria-label="Market depth"><DepthIcon /></PlainButton>
        </BottomIcons>
        <ScrollButton aria-label="Scroll left"><Triangle dir="left" /></ScrollButton>
        <ScrollRange type="range" aria-label="Scroll position" defaultValue="100" />
        <ScrollButton aria-label="Scroll right"><Triangle dir="right" /></ScrollButton>
        <BottomIcons $gap="10px" $padding="0 0 0 7px">
          <PlainButton aria-label="Chart settings"><ChartSettingsIcon /></PlainButton>
          <PlainButton aria-label="Fit"><ZoomFitIcon /></PlainButton>
          <PlainButton aria-label="Zoom out"><MagnifierIcon mark="minus" /></PlainButton>
          <PlainButton aria-label="Zoom in"><MagnifierIcon mark="plus" /></PlainButton>
        </BottomIcons>
      </BottomBar>
    </Window>
  );
}

export default App;
